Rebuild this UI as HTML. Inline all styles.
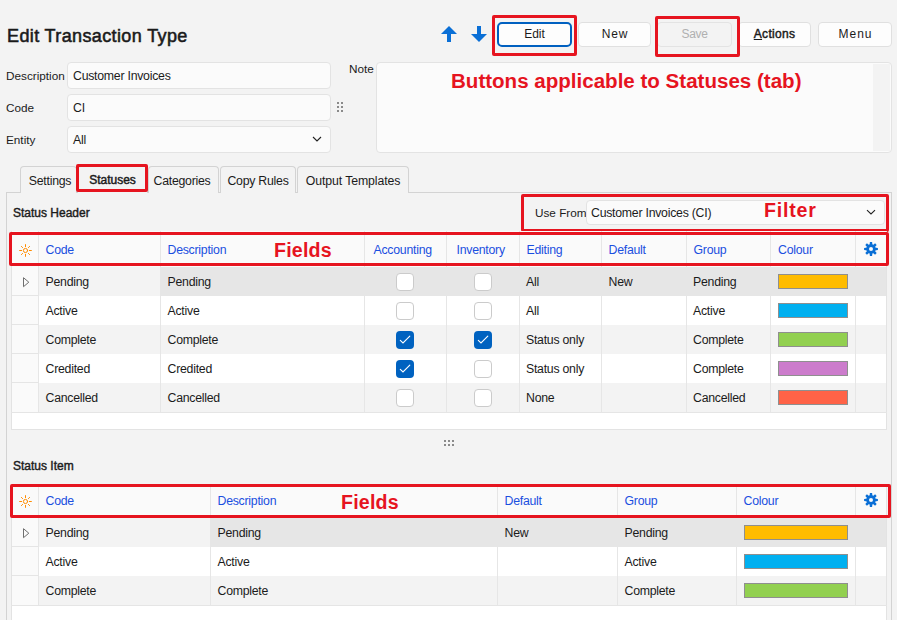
<!DOCTYPE html><html><head><meta charset="utf-8"><style>
*{box-sizing:border-box;margin:0;padding:0}
html,body{width:897px;height:620px;overflow:hidden;background:#f3f3f3;font-family:"Liberation Sans",sans-serif;color:#1b1b1b;position:relative}
.a{position:absolute}
.tx{position:absolute;white-space:nowrap;line-height:14px;font-size:12.3px;letter-spacing:-0.25px}
.inp{position:absolute;background:#fbfbfb;border:1px solid #e3e3e3;border-radius:4px}
.btn{position:absolute;top:22px;height:25px;width:74px;background:#fdfdfd;border:1px solid #e0e0e0;border-radius:4px;text-align:center;font-size:12px;line-height:23px;color:#1b1b1b}
.red{position:absolute;border:3px solid #e6141f;border-radius:2px}
.ann{position:absolute;white-space:nowrap;color:#e6141f;font-weight:bold;line-height:20px}
.tab{position:absolute;top:166px;height:27px;border:1px solid #d3d3d3;border-bottom:none;border-radius:4px 4px 0 0;background:#f3f3f3;font-size:12.3px;letter-spacing:-0.25px;line-height:28px;text-align:center}
.hd{position:absolute;color:#1a4fe0;font-size:12.3px;letter-spacing:-0.25px;line-height:14px;white-space:nowrap}
.vl{position:absolute;width:1px;background:#e6e6e6}
.hl{position:absolute;height:1px;background:#e3e3e3}
.cb{position:absolute;width:18px;height:18px;border:1px solid #cbcbcb;border-radius:4px;background:#fff}
.cbc{position:absolute;width:18px;height:18px;border-radius:4px;background:#0062c0}
.sw{position:absolute;height:15px;border:1px solid #8f8f8f}
</style></head><body>
<div class="tx" style="left:7px;top:26px;font-size:18px;letter-spacing:0.38px;-webkit-text-stroke:0.55px #1a1a1a;line-height:20px;color:#1a1a1a">Edit Transaction Type</div>
<svg class="a" style="left:436px;top:20px" width="60" height="30" viewBox="0 0 60 30"><path d="M13 6 L21 14 L15 14 L15 22 L11 22 L11 14 L5 14 Z M41 6 L45 6 L45 14 L51 14 L43 22 L35 14 L41 14 Z" fill="#0a6fd6"/></svg>
<div class="btn" style="left:497px;width:75px;border:2px solid #0060c0;line-height:21px;border-radius:5px">Edit</div>
<div class="btn" style="left:578px;width:73px;letter-spacing:0.9px;padding-left:1px">New</div>
<div class="btn" style="left:657px;width:75px;background:#f3f3f3;border-color:#e3e3e3;color:#b0b0b0;letter-spacing:-0.3px">Save</div>
<div class="btn" style="left:738px;width:73px;letter-spacing:0.3px;-webkit-text-stroke:0.45px #1b1b1b"><u>A</u>ctions</div>
<div class="btn" style="left:818px;width:74px;letter-spacing:1px;padding-left:1px">Menu</div>
<div class="red" style="left:492px;top:15px;width:85px;height:41px;border-radius:2px"></div>
<div class="red" style="left:655px;top:16px;width:85px;height:41px;border-radius:2px"></div>
<div class="tx" style="left:6px;top:69px;font-size:11.75px;letter-spacing:0">Description</div>
<div class="inp" style="left:67px;top:62px;width:264px;height:27px"></div>
<div class="tx" style="left:73px;top:69px;">Customer Invoices</div>
<div class="tx" style="left:6px;top:101px;font-size:11.75px;letter-spacing:0">Code</div>
<div class="inp" style="left:67px;top:94px;width:264px;height:27px"></div>
<div class="tx" style="left:73px;top:101px;">CI</div>
<div class="tx" style="left:6px;top:133px;font-size:11.75px;letter-spacing:0">Entity</div>
<div class="inp" style="left:67px;top:126px;width:264px;height:27px"></div>
<div class="tx" style="left:73px;top:133px;">All</div>
<svg class="a" style="left:312px;top:136px" width="10" height="7" viewBox="0 0 10 7"><path d="M1 1 L5 5 L9 1" stroke="#222" stroke-width="1.1" fill="none"/></svg>
<div class="a" style="left:337px;top:102px;width:2px;height:2px;background:#8a8a8a"></div>
<div class="a" style="left:337px;top:106px;width:2px;height:2px;background:#8a8a8a"></div>
<div class="a" style="left:337px;top:110px;width:2px;height:2px;background:#8a8a8a"></div>
<div class="a" style="left:341px;top:102px;width:2px;height:2px;background:#8a8a8a"></div>
<div class="a" style="left:341px;top:106px;width:2px;height:2px;background:#8a8a8a"></div>
<div class="a" style="left:341px;top:110px;width:2px;height:2px;background:#8a8a8a"></div>
<div class="tx" style="left:349px;top:62px;font-size:11.75px;letter-spacing:0">Note</div>
<div class="inp" style="left:376px;top:62px;width:516px;height:91px"></div>
<div class="a" style="left:873px;top:64px;width:17px;height:87px;background:#f3f3f3"></div>
<div class="ann" style="left:451px;top:71px;font-size:20.55px">Buttons applicable to Statuses (tab)</div>
<div class="a" style="left:6px;top:192px;width:886px;height:440px;border:1px solid #d3d3d3;background:#f3f3f3"></div>
<div class="tab" style="left:20px;width:57px;padding-left:3px">Settings</div>
<div class="tab" style="left:77px;width:71px;font-size:12px;letter-spacing:0;-webkit-text-stroke:0.45px #1b1b1b;line-height:26px">Statuses</div>
<div class="tab" style="left:148px;width:71px;padding-right:3px">Categories</div>
<div class="tab" style="left:220px;width:76px">Copy Rules</div>
<div class="tab" style="left:297px;width:112px;letter-spacing:-0.1px">Output Templates</div>
<div class="red" style="left:76px;top:164px;width:72px;height:28px"></div>
<div class="tx" style="left:13px;top:206px;font-size:12px;letter-spacing:0;-webkit-text-stroke:0.4px #1b1b1b">Status Header</div>
<div class="tx" style="left:535px;top:206px;font-size:11.75px;letter-spacing:0">Use From</div>
<div class="inp" style="left:586px;top:200px;width:299px;height:25px"></div>
<div class="tx" style="left:591px;top:206px;">Customer Invoices (CI)</div>
<svg class="a" style="left:866px;top:209px" width="10" height="7" viewBox="0 0 10 7"><path d="M1 1.2 L5 4.9 L9 1.2" stroke="#222" stroke-width="1.1" fill="none"/></svg>
<div class="ann" style="left:764px;top:200px;font-size:19.6px;letter-spacing:0.8px">Filter</div>
<div class="red" style="left:521px;top:194px;width:368px;height:38px"></div>
<div class="a" style="left:11px;top:231px;width:876px;height:36px;background:#fafafa"></div>
<div class="a" style="left:11px;top:267px;width:876px;height:29px;background:#f3f3f3"></div>
<div class="a" style="left:160px;top:267px;width:727px;height:29px;background:#e6e6e6"></div>
<div class="a" style="left:11px;top:267px;width:27px;height:29px;background:#fafafa;border-bottom:1px solid #e5e5e5"></div>
<div class="a" style="left:11px;top:296px;width:876px;height:29px;background:#ffffff"></div>
<div class="a" style="left:11px;top:296px;width:27px;height:29px;background:#fafafa;border-bottom:1px solid #e5e5e5"></div>
<div class="a" style="left:11px;top:325px;width:876px;height:29px;background:#f3f3f3"></div>
<div class="a" style="left:11px;top:325px;width:27px;height:29px;background:#fafafa;border-bottom:1px solid #e5e5e5"></div>
<div class="a" style="left:11px;top:354px;width:876px;height:29px;background:#ffffff"></div>
<div class="a" style="left:11px;top:354px;width:27px;height:29px;background:#fafafa;border-bottom:1px solid #e5e5e5"></div>
<div class="a" style="left:11px;top:383px;width:876px;height:29px;background:#f3f3f3"></div>
<div class="a" style="left:11px;top:383px;width:27px;height:29px;background:#fafafa;"></div>
<div class="a" style="left:11px;top:412px;width:876px;height:1px;background:#e5e5e5;z-index:1"></div>
<div class="a" style="left:11px;top:412px;width:876px;height:17px;background:#fff"></div>
<div class="a" style="left:11px;top:412px;width:876px;height:1px;background:#e5e5e5"></div>
<div class="a" style="left:11px;top:429px;width:876px;height:1px;background:#e3e3e3"></div>
<div class="a" style="left:11px;top:231px;width:1px;height:198px;background:#e3e3e3"></div>
<div class="a" style="left:886px;top:231px;width:1px;height:198px;background:#e3e3e3"></div>
<div class="vl" style="left:38px;top:231px;height:181px"></div>
<div class="vl" style="left:160px;top:231px;height:181px"></div>
<div class="vl" style="left:364px;top:231px;height:181px"></div>
<div class="vl" style="left:446px;top:231px;height:181px"></div>
<div class="vl" style="left:519px;top:231px;height:181px"></div>
<div class="vl" style="left:601px;top:231px;height:181px"></div>
<div class="vl" style="left:686px;top:231px;height:181px"></div>
<div class="vl" style="left:770px;top:231px;height:181px"></div>
<div class="vl" style="left:855px;top:231px;height:181px"></div>
<svg class="a" style="left:18px;top:243px" width="16" height="16" viewBox="0 0 16 16"><g stroke="#ff8c00" stroke-width="1" fill="none" stroke-linecap="round"><circle cx="7.5" cy="7.5" r="2.1"/><path d="M7.5 1.6v2M7.5 11.4v2M1.6 7.5h2M11.4 7.5h2M3.4 3.4l1.2 1.2M10.4 10.4l1.2 1.2M3.4 11.6l1.2-1.2M10.4 4.6l1.2-1.2"/></g></svg>
<svg class="a" style="left:863px;top:241px" width="16" height="16" viewBox="0 0 16 16"><g fill="#0a6fd6"><path fill-rule="evenodd" d="M8 3.3A4.7 4.7 0 1 0 8 12.7A4.7 4.7 0 1 0 8 3.3Z M8 6A2 2 0 1 1 8 10A2 2 0 1 1 8 6Z"/><path d="M6.9 1.1H9.1L9.5 4.5H6.5Z" transform="rotate(0 8 8)"/><path d="M6.9 1.1H9.1L9.5 4.5H6.5Z" transform="rotate(45 8 8)"/><path d="M6.9 1.1H9.1L9.5 4.5H6.5Z" transform="rotate(90 8 8)"/><path d="M6.9 1.1H9.1L9.5 4.5H6.5Z" transform="rotate(135 8 8)"/><path d="M6.9 1.1H9.1L9.5 4.5H6.5Z" transform="rotate(180 8 8)"/><path d="M6.9 1.1H9.1L9.5 4.5H6.5Z" transform="rotate(225 8 8)"/><path d="M6.9 1.1H9.1L9.5 4.5H6.5Z" transform="rotate(270 8 8)"/><path d="M6.9 1.1H9.1L9.5 4.5H6.5Z" transform="rotate(315 8 8)"/></g></svg>
<div class="hd" style="left:45.5px;top:243px">Code</div>
<div class="hd" style="left:167.5px;top:243px">Description</div>
<div class="hd" style="left:373.5px;top:243px">Accounting</div>
<div class="hd" style="left:456.5px;top:243px">Inventory</div>
<div class="hd" style="left:526.5px;top:243px">Editing</div>
<div class="hd" style="left:608.5px;top:243px">Default</div>
<div class="hd" style="left:693.5px;top:243px">Group</div>
<div class="hd" style="left:778px;top:243px">Colour</div>
<div class="tx" style="left:45.5px;top:275px;">Pending</div>
<div class="tx" style="left:167.5px;top:275px;">Pending</div>
<div class="cb" style="left:396px;top:273px"></div>
<div class="cb" style="left:474px;top:273px"></div>
<div class="tx" style="left:526px;top:275px;">All</div>
<div class="tx" style="left:608.5px;top:275px;">New</div>
<div class="tx" style="left:693px;top:275px;">Pending</div>
<div class="sw" style="left:778px;top:274px;width:70px;background:#ffbc00"></div>
<svg class="a" style="left:23px;top:277px" width="8" height="11" viewBox="0 0 8 11"><path d="M0.5 0.7 L5.8 5.2 L0.5 9.7 Z" stroke="#6e6e6e" stroke-width="1" fill="none" stroke-linejoin="miter"/></svg>
<div class="tx" style="left:45.5px;top:304px;">Active</div>
<div class="tx" style="left:167.5px;top:304px;">Active</div>
<div class="cb" style="left:396px;top:302px"></div>
<div class="cb" style="left:474px;top:302px"></div>
<div class="tx" style="left:526px;top:304px;">All</div>
<div class="tx" style="left:608.5px;top:304px;"></div>
<div class="tx" style="left:693px;top:304px;">Active</div>
<div class="sw" style="left:778px;top:303px;width:70px;background:#00b0f0"></div>
<div class="tx" style="left:45.5px;top:333px;">Complete</div>
<div class="tx" style="left:167.5px;top:333px;">Complete</div>
<div class="cbc" style="left:396px;top:331px"></div><svg class="a" style="left:396px;top:331px" width="18" height="18" viewBox="0 0 18 18"><path d="M4.3 9.3 L7 11.9 L13.8 5.2" stroke="#fff" stroke-width="1.1" fill="none" stroke-linecap="round"/></svg>
<div class="cbc" style="left:474px;top:331px"></div><svg class="a" style="left:474px;top:331px" width="18" height="18" viewBox="0 0 18 18"><path d="M4.3 9.3 L7 11.9 L13.8 5.2" stroke="#fff" stroke-width="1.1" fill="none" stroke-linecap="round"/></svg>
<div class="tx" style="left:526px;top:333px;">Status only</div>
<div class="tx" style="left:608.5px;top:333px;"></div>
<div class="tx" style="left:693px;top:333px;">Complete</div>
<div class="sw" style="left:778px;top:332px;width:70px;background:#92d050"></div>
<div class="tx" style="left:45.5px;top:362px;">Credited</div>
<div class="tx" style="left:167.5px;top:362px;">Credited</div>
<div class="cbc" style="left:396px;top:360px"></div><svg class="a" style="left:396px;top:360px" width="18" height="18" viewBox="0 0 18 18"><path d="M4.3 9.3 L7 11.9 L13.8 5.2" stroke="#fff" stroke-width="1.1" fill="none" stroke-linecap="round"/></svg>
<div class="cb" style="left:474px;top:360px"></div>
<div class="tx" style="left:526px;top:362px;">Status only</div>
<div class="tx" style="left:608.5px;top:362px;"></div>
<div class="tx" style="left:693px;top:362px;">Complete</div>
<div class="sw" style="left:778px;top:361px;width:70px;background:#cc7ccc"></div>
<div class="tx" style="left:45.5px;top:391px;">Cancelled</div>
<div class="tx" style="left:167.5px;top:391px;">Cancelled</div>
<div class="cb" style="left:396px;top:389px"></div>
<div class="cb" style="left:474px;top:389px"></div>
<div class="tx" style="left:526px;top:391px;">None</div>
<div class="tx" style="left:608.5px;top:391px;"></div>
<div class="tx" style="left:693px;top:391px;">Cancelled</div>
<div class="sw" style="left:778px;top:390px;width:70px;background:#ff6347"></div>
<div class="red" style="left:9px;top:232px;width:880px;height:34px"></div>
<div class="ann" style="left:274px;top:240px;font-size:19.6px;letter-spacing:0.2px">Fields</div>
<div class="a" style="left:444px;top:440px;width:2px;height:2px;background:#8a8a8a"></div>
<div class="a" style="left:444px;top:444px;width:2px;height:2px;background:#8a8a8a"></div>
<div class="a" style="left:448px;top:440px;width:2px;height:2px;background:#8a8a8a"></div>
<div class="a" style="left:448px;top:444px;width:2px;height:2px;background:#8a8a8a"></div>
<div class="a" style="left:452px;top:440px;width:2px;height:2px;background:#8a8a8a"></div>
<div class="a" style="left:452px;top:444px;width:2px;height:2px;background:#8a8a8a"></div>
<div class="tx" style="left:13px;top:459px;font-size:12px;letter-spacing:0;-webkit-text-stroke:0.4px #1b1b1b">Status Item</div>
<div class="a" style="left:11px;top:484px;width:876px;height:34px;background:#fafafa"></div>
<div class="a" style="left:11px;top:518px;width:876px;height:29px;background:#f3f3f3"></div>
<div class="a" style="left:210px;top:518px;width:677px;height:29px;background:#e6e6e6"></div>
<div class="a" style="left:11px;top:518px;width:27px;height:29px;background:#fafafa;border-bottom:1px solid #e5e5e5"></div>
<div class="a" style="left:11px;top:547px;width:876px;height:29px;background:#ffffff"></div>
<div class="a" style="left:11px;top:547px;width:27px;height:29px;background:#fafafa;border-bottom:1px solid #e5e5e5"></div>
<div class="a" style="left:11px;top:576px;width:876px;height:29px;background:#f3f3f3"></div>
<div class="a" style="left:11px;top:576px;width:27px;height:29px;background:#fafafa;"></div>
<div class="a" style="left:11px;top:605px;width:876px;height:1px;background:#e5e5e5;z-index:1"></div>
<div class="a" style="left:11px;top:605px;width:876px;height:15px;background:#fff"></div>
<div class="a" style="left:11px;top:605px;width:876px;height:1px;background:#e5e5e5"></div>
<div class="a" style="left:11px;top:484px;width:1px;height:136px;background:#e3e3e3"></div>
<div class="a" style="left:886px;top:484px;width:1px;height:136px;background:#e3e3e3"></div>
<div class="vl" style="left:38px;top:484px;height:121px"></div>
<div class="vl" style="left:210px;top:484px;height:121px"></div>
<div class="vl" style="left:497px;top:484px;height:121px"></div>
<div class="vl" style="left:617px;top:484px;height:121px"></div>
<div class="vl" style="left:736px;top:484px;height:121px"></div>
<div class="vl" style="left:855px;top:484px;height:121px"></div>
<svg class="a" style="left:18px;top:494px" width="16" height="16" viewBox="0 0 16 16"><g stroke="#ff8c00" stroke-width="1" fill="none" stroke-linecap="round"><circle cx="7.5" cy="7.5" r="2.1"/><path d="M7.5 1.6v2M7.5 11.4v2M1.6 7.5h2M11.4 7.5h2M3.4 3.4l1.2 1.2M10.4 10.4l1.2 1.2M3.4 11.6l1.2-1.2M10.4 4.6l1.2-1.2"/></g></svg>
<svg class="a" style="left:863px;top:492px" width="16" height="16" viewBox="0 0 16 16"><g fill="#0a6fd6"><path fill-rule="evenodd" d="M8 3.3A4.7 4.7 0 1 0 8 12.7A4.7 4.7 0 1 0 8 3.3Z M8 6A2 2 0 1 1 8 10A2 2 0 1 1 8 6Z"/><path d="M6.9 1.1H9.1L9.5 4.5H6.5Z" transform="rotate(0 8 8)"/><path d="M6.9 1.1H9.1L9.5 4.5H6.5Z" transform="rotate(45 8 8)"/><path d="M6.9 1.1H9.1L9.5 4.5H6.5Z" transform="rotate(90 8 8)"/><path d="M6.9 1.1H9.1L9.5 4.5H6.5Z" transform="rotate(135 8 8)"/><path d="M6.9 1.1H9.1L9.5 4.5H6.5Z" transform="rotate(180 8 8)"/><path d="M6.9 1.1H9.1L9.5 4.5H6.5Z" transform="rotate(225 8 8)"/><path d="M6.9 1.1H9.1L9.5 4.5H6.5Z" transform="rotate(270 8 8)"/><path d="M6.9 1.1H9.1L9.5 4.5H6.5Z" transform="rotate(315 8 8)"/></g></svg>
<div class="hd" style="left:45.5px;top:494px">Code</div>
<div class="hd" style="left:217.5px;top:494px">Description</div>
<div class="hd" style="left:504.5px;top:494px">Default</div>
<div class="hd" style="left:624.5px;top:494px">Group</div>
<div class="hd" style="left:743.5px;top:494px">Colour</div>
<div class="tx" style="left:45.5px;top:526px;">Pending</div>
<div class="tx" style="left:217.5px;top:526px;">Pending</div>
<div class="tx" style="left:504.5px;top:526px;">New</div>
<div class="tx" style="left:624.5px;top:526px;">Pending</div>
<div class="sw" style="left:744px;top:525px;width:104px;background:#ffbc00"></div>
<svg class="a" style="left:23px;top:528px" width="8" height="11" viewBox="0 0 8 11"><path d="M0.5 0.7 L5.8 5.2 L0.5 9.7 Z" stroke="#6e6e6e" stroke-width="1" fill="none" stroke-linejoin="miter"/></svg>
<div class="tx" style="left:45.5px;top:555px;">Active</div>
<div class="tx" style="left:217.5px;top:555px;">Active</div>
<div class="tx" style="left:504.5px;top:555px;"></div>
<div class="tx" style="left:624.5px;top:555px;">Active</div>
<div class="sw" style="left:744px;top:554px;width:104px;background:#00b0f0"></div>
<div class="tx" style="left:45.5px;top:584px;">Complete</div>
<div class="tx" style="left:217.5px;top:584px;">Complete</div>
<div class="tx" style="left:504.5px;top:584px;"></div>
<div class="tx" style="left:624.5px;top:584px;">Complete</div>
<div class="sw" style="left:744px;top:583px;width:104px;background:#92d050"></div>
<div class="red" style="left:10px;top:484px;width:881px;height:34px"></div>
<div class="ann" style="left:341px;top:492px;font-size:19.6px;letter-spacing:0.2px">Fields</div>
</body></html>
